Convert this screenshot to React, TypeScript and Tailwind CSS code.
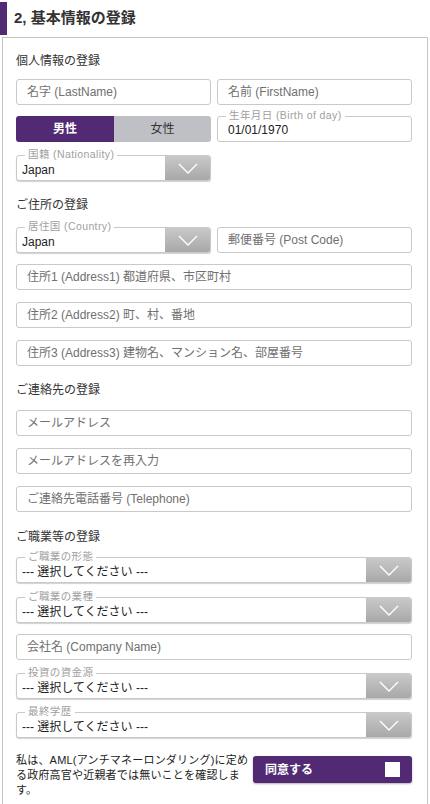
import React from "react";

const FONT = { fontFamily: '"Liberation Sans", "Noto Sans CJK JP", sans-serif' };

function Chevron() {
  return (
    <svg width="20" height="11" viewBox="0 0 20 11" fill="none">
      <path d="M1 1 L10 10 L19 1" stroke="#ffffff" strokeWidth="1.4" strokeLinejoin="miter" />
    </svg>
  );
}

function TextInput({ placeholder, className = "" }: { placeholder: string; className?: string }) {
  return (
    <input
      type="text"
      placeholder={placeholder}
      className={`h-[26px] rounded-[3px] border border-[#c9c9c9] bg-white pl-[10px] text-[12px] text-[#222] placeholder:text-[#707070] outline-none ${className}`}
      style={FONT}
    />
  );
}

function Labeled({ label, children, className = "" }: { label: string; children: React.ReactNode; className?: string }) {
  return (
    <div className={`relative ${className}`}>
      {children}
      <span className="absolute -top-[7px] left-[9px] bg-white px-[3px] text-[10.5px] leading-[12px] tracking-[0.4px] text-[#a0a0a0]">
        {label}
      </span>
    </div>
  );
}

function Select({ value, className = "" }: { value: string; className?: string }) {
  return (
    <div className={`flex h-[26px] overflow-hidden rounded-[3px] border border-[#c9c9c9] bg-white shadow-[0_1px_1px_rgba(0,0,0,0.18)] ${className}`}>
      <div className="flex flex-1 items-center pl-[5px] pt-[3px] text-[12px] text-[#1e1e1e]">{value}</div>
      <div className="flex w-[45px] items-center justify-center bg-gradient-to-b from-[#c9c9c9] to-[#a8a8a8]">
        <Chevron />
      </div>
    </div>
  );
}

function SectionTitle({ children, className = "" }: { children: React.ReactNode; className?: string }) {
  return <div className={`h-[16px] text-[12px] leading-[16px] text-[#333] ${className}`}>{children}</div>;
}

export default function App() {
  return (
    <div className="w-[430px] bg-white text-[#333]" style={FONT}>
      <div className="mt-[2px] flex h-[33px] items-center">
        <div className="h-full w-[7px] bg-[#522a73]" />
        <h2 className="ml-[7px] text-[15px] font-bold text-[#333]">2, 基本情報の登録</h2>
      </div>
      <div className="ml-[2px] mt-[2px] w-[426px] border border-[#c4c4c4] pb-[24px] pl-[13px] pr-[15px] pt-[15px]">
        <SectionTitle>個人情報の登録</SectionTitle>
        <div className="mt-[10px] flex gap-[6px]">
          <TextInput placeholder="名字 (LastName)" className="w-[195px]" />
          <TextInput placeholder="名前 (FirstName)" className="w-[195px]" />
        </div>
        <div className="mt-[11px] flex gap-[6px]">
          <div className="flex h-[26px] w-[195px] overflow-hidden rounded-[3px] text-[12px]">
            <div className="flex w-[98px] items-center justify-center bg-[#522a73] font-bold text-white">男性</div>
            <div className="flex flex-1 items-center justify-center bg-[#bec0c5] text-[#333]">女性</div>
          </div>
          <Labeled label="生年月日 (Birth of day)" className="w-[195px]">
            <div className="flex h-[26px] items-center rounded-[3px] border border-[#c9c9c9] bg-white pl-[10px] pt-[2px] text-[12px] text-[#222]">
              01/01/1970
            </div>
          </Labeled>
        </div>
        <Labeled label="国籍 (Nationality)" className="mt-[13px] w-[195px]">
          <Select value="Japan" />
        </Labeled>

        <SectionTitle className="mt-[16px]">ご住所の登録</SectionTitle>
        <div className="mt-[14px] flex gap-[6px]">
          <Labeled label="居住国 (Country)" className="w-[195px]">
            <Select value="Japan" />
          </Labeled>
          <TextInput placeholder="郵便番号 (Post Code)" className="w-[195px]" />
        </div>
        <TextInput placeholder="住所1 (Address1) 都道府県、市区町村" className="mt-[11px] w-full" />
        <TextInput placeholder="住所2 (Address2) 町、村、番地" className="mt-[12px] w-full" />
        <TextInput placeholder="住所3 (Address3) 建物名、マンション名、部屋番号" className="mt-[12px] w-full" />

        <SectionTitle className="mt-[16px]">ご連絡先の登録</SectionTitle>
        <TextInput placeholder="メールアドレス" className="mt-[12px] w-full" />
        <TextInput placeholder="メールアドレスを再入力" className="mt-[12px] w-full" />
        <TextInput placeholder="ご連絡先電話番号 (Telephone)" className="mt-[12px] w-full" />

        <SectionTitle className="mt-[17px]">ご職業等の登録</SectionTitle>
        <Labeled label="ご職業の形態" className="mt-[12px]">
          <Select value="--- 選択してください ---" />
        </Labeled>
        <Labeled label="ご職業の業種" className="mt-[14px]">
          <Select value="--- 選択してください ---" />
        </Labeled>
        <TextInput placeholder="会社名 (Company Name)" className="mt-[11px] w-full" />
        <Labeled label="投資の資金源" className="mt-[13px]">
          <Select value="--- 選択してください ---" />
        </Labeled>
        <Labeled label="最終学歴" className="mt-[13px]">
          <Select value="--- 選択してください ---" />
        </Labeled>

        <div className="mt-[15px] flex items-start justify-between">
          <p className="whitespace-nowrap text-[11px] leading-[15px] tracking-[0.2px] text-[#222]">
            私は、AML(アンチマネーロンダリング)に定め
            <br />
            る政府高官や近親者では無いことを確認しま
            <br />
            す。
          </p>
          <div className="mt-[3px] flex h-[27px] w-[159px] items-center justify-between rounded-[3px] bg-[#522a73] pl-[12px] pr-[12px] shadow-[0_1px_2px_rgba(0,0,0,0.3)]">
            <span className="text-[12px] font-bold text-white">同意する</span>
            <span className="h-[15px] w-[15px] bg-white" />
          </div>
        </div>
      </div>
    </div>
  );
}
